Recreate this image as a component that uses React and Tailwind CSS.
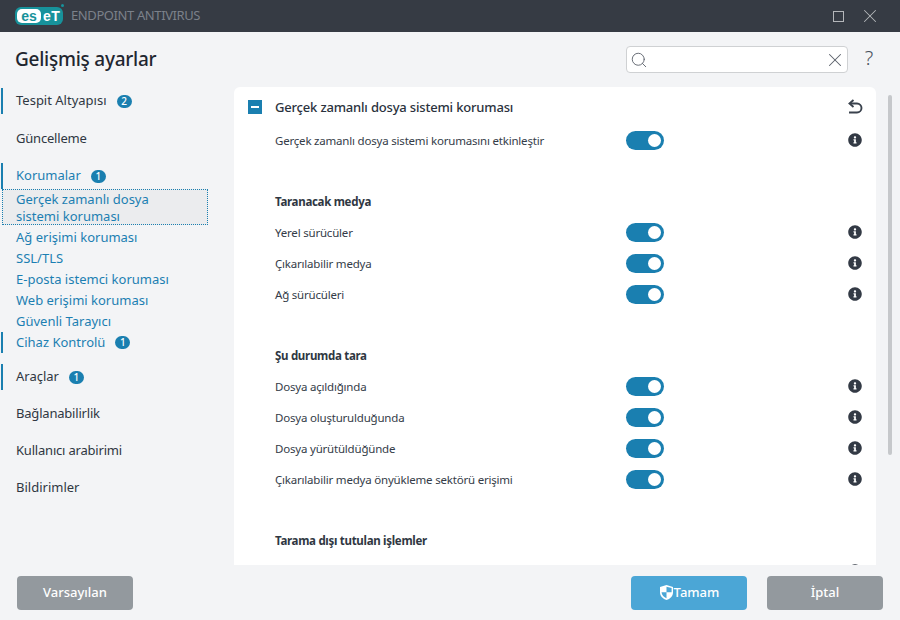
import { Search, X } from 'lucide-react';
import { FaInfoCircle } from 'react-icons/fa';

const font = "font-['Noto_Sans','Open_Sans',sans-serif]";

const Badge = ({ n }) => (
    <span className="ml-[10px] w-[15px] h-[13px] rounded-full bg-[#1a7fb0] text-white text-[10px] font-medium leading-[13px] text-center">{n}</span>
);

const TopItem = ({ label, badge, bar, blue, tight, mb = 'mb-[11px]' }) => (
    <div className={`h-[26px] flex items-center ml-[1px] text-[13px] ${mb} ${bar ? 'border-l-2 border-[#1a7fb0] pl-[13px]' : 'pl-[15px]'} ${blue ? 'text-[#1c7fb2]' : 'text-[#2f3742]'} ${tight ? 'tracking-[-0.2px]' : ''}`}>
        {label}
        {badge && <Badge n={badge} />}
    </div>
);

const SubItem = ({ label }) => (
    <div className="h-[21px] flex items-center pl-[16px] text-[13px] text-[#1c7fb2]">{label}</div>
);

const Toggle = () => (
    <div className="w-[38px] h-[19px] rounded-full bg-[#1a7fb0] flex items-center justify-end pr-[3px]">
        <div className="w-[13px] h-[13px] rounded-full bg-white" />
    </div>
);

const Row = ({ label, noToggle }) => (
    <div className="h-[31px] flex items-center pl-[41px] pr-[14px] shrink-0">
        <span className="w-[351px] text-[11.5px] tracking-[-0.2px] text-[#343c48]">{label}</span>
        {!noToggle && <Toggle />}
        <FaInfoCircle className="ml-auto -mt-[2px] text-[#333a45]" size={14} />
    </div>
);

const SectionHead = ({ label }) => (
    <div className="h-[31px] mt-[30px] flex items-center pl-[41px] text-[11.5px] tracking-[-0.3px] font-bold text-[#2f3742] shrink-0">{label}</div>
);

export default function App() {
    return (
        <div className={`w-[900px] h-[620px] flex flex-col overflow-hidden bg-[#f3f4f6] ${font}`}>
            {/* title bar */}
            <div className="h-[32px] shrink-0 bg-[#363b44] flex items-center pl-[15px]">
                <div className="relative w-[48px] h-[18px] rounded-[6px] bg-[#17929b] flex items-center pl-[2px] font-['Liberation_Sans',sans-serif] font-bold text-[14px] leading-none">
                    <span className="h-[14px] w-[24px] rounded-[5px] bg-white text-[#17929b] flex items-center justify-center">es</span>
                    <span className="ml-[2px] text-white tracking-[0.5px]">eT</span>
                    <span className="absolute -top-[3px] -right-[1px] w-[3px] h-[3px] rounded-full bg-[#17929b]" />
                </div>
                <span className="ml-[8px] text-[13px] tracking-[-0.4px] text-[#7c818a]">ENDPOINT ANTIVIRUS</span>
                <div className="ml-auto w-[11px] h-[11px] border border-[#b4b6ba]" />
                <X className="ml-[15px] mr-[19px] text-[#b4b6ba]" size={22} strokeWidth={1.1} />
            </div>

            {/* header */}
            <div className="h-[55px] shrink-0 flex items-center pl-[15px] pr-[10px]">
                <h1 className="text-[19px] tracking-[-0.25px] font-medium text-[#1f2630]">Gelişmiş ayarlar</h1>
                <div className="ml-auto w-[222px] h-[27px] rounded-[4px] border border-[#cfd1d3] bg-white flex items-center justify-between pl-[3px] pr-[1px]">
                    <Search className="text-[#5a606a]" size={18} strokeWidth={1.2} />
                    <X className="text-[#5a606a]" size={22} strokeWidth={1.1} />
                </div>
                <span className="w-[42px] -mt-[3px] text-center text-[20px] font-light text-[#48505b]">?</span>
            </div>

            <div className="flex-1 min-h-0 flex">
                {/* sidebar */}
                <div className="w-[234px] shrink-0 pt-[1px]">
                    <TopItem label="Tespit Altyapısı" badge="2" bar mb="mb-[12px]" />
                    <TopItem label="Güncelleme" tight />
                    <TopItem label="Korumalar" badge="1" bar blue mb="mb-0" />
                    <div className="ml-[2px] w-[206px] h-[36px] pl-[13px] pt-[1px] border border-dotted border-[#1a7fb0] bg-[#ebecee] text-[13px] leading-[17px] text-[#1c7fb2] flex items-center">
                        <span className="block w-[170px]">Gerçek zamanlı dosya sistemi koruması</span>
                    </div>
                    <div className="pt-[2px]">
                        <SubItem label="Ağ erişimi koruması" />
                        <SubItem label="SSL/TLS" />
                        <SubItem label="E-posta istemci koruması" />
                        <SubItem label="Web erişimi koruması" />
                        <SubItem label="Güvenli Tarayıcı" />
                    </div>
                    <div className="h-[21px] ml-[1px] flex items-center pl-[13px] border-l-2 border-[#1a7fb0] text-[13px] text-[#1c7fb2] mb-[11px]">
                        Cihaz Kontrolü
                        <Badge n="1" />
                    </div>
                    <TopItem label="Araçlar" badge="1" bar />
                    <TopItem label="Bağlanabilirlik" tight />
                    <TopItem label="Kullanıcı arabirimi" tight />
                    <TopItem label="Bildirimler" />
                </div>

                {/* panel */}
                <div className="w-[642px] h-[478px] shrink-0 rounded-t-[6px] bg-white overflow-hidden flex flex-col">
                    <div className="h-[36px] shrink-0 mt-[2px] flex items-center pl-[14px] pr-[13px]">
                        <div className="w-[14px] h-[14px] bg-[#1a7fb0] flex items-center justify-center">
                            <div className="w-[8px] h-[2px] bg-white" />
                        </div>
                        <span className="ml-[13px] mt-[2px] text-[13px] tracking-[-0.18px] font-medium text-[#2a323d]">Gerçek zamanlı dosya sistemi koruması</span>
                        <svg className="ml-auto" width="16" height="16" viewBox="0 0 16 16" fill="none" stroke="#3a424d" strokeWidth="1.9">
                            <path d="M6.5 1 L2.5 4.5 L6.5 8" />
                            <path d="M3 4.5 H10 A4.4 4.4 0 0 1 10 13.5 H2" />
                        </svg>
                    </div>
                    <Row label="Gerçek zamanlı dosya sistemi korumasını etkinleştir" />
                    <SectionHead label="Taranacak medya" />
                    <Row label="Yerel sürücüler" />
                    <Row label="Çıkarılabilir medya" />
                    <Row label="Ağ sürücüleri" />
                    <SectionHead label="Şu durumda tara" />
                    <Row label="Dosya açıldığında" />
                    <Row label="Dosya oluşturulduğunda" />
                    <Row label="Dosya yürütüldüğünde" />
                    <Row label="Çıkarılabilir medya önyükleme sektörü erişimi" />
                    <SectionHead label="Tarama dışı tutulan işlemler" />
                    <Row label="" noToggle />
                </div>

                {/* scrollbar */}
                <div className="ml-[12px] pt-[8px]">
                    <div className="w-[4px] h-[360px] rounded-full bg-[#c6c8cb]" />
                </div>
            </div>

            {/* footer */}
            <div className="h-[55px] shrink-0 flex items-center pl-[17px] pr-[17px] text-[13px] font-medium text-white">
                <button className="w-[116px] h-[34px] rounded-[4px] bg-[#93999e]">Varsayılan</button>
                <button className="ml-auto w-[116px] h-[34px] rounded-[4px] bg-[#4ba6d6] flex items-center justify-center">
                    <svg width="15" height="17" viewBox="0 0 15 16">
                        <path d="M7.5 0.5 L14 2.5 V8 C14 11.5 11 14.5 7.5 15.5 C4 14.5 1 11.5 1 8 V2.5 Z" fill="#ffffff" />
                        <path d="M7.5 2.2 L12.6 3.6 V7.8 H7.5 Z M7.5 7.8 V13.8 C5 12.9 2.8 10.6 2.5 7.8 Z" fill="#4ba6d6" />
                    </svg>
                    Tamam
                </button>
                <button className="ml-[20px] w-[116px] h-[34px] rounded-[4px] bg-[#93999e]">İptal</button>
            </div>
        </div>
    );
}
